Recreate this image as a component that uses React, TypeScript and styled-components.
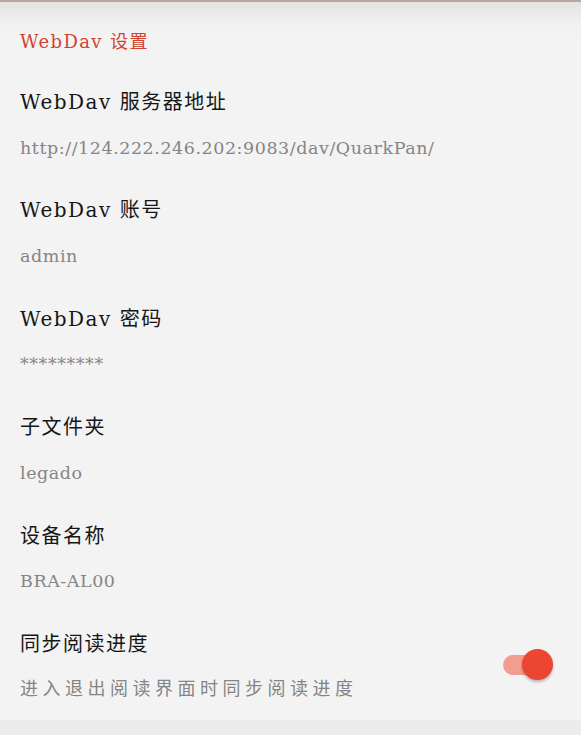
import React from "react";
import styled, { createGlobalStyle } from "styled-components";

const Global = createGlobalStyle`
  html, body { margin: 0; padding: 0; }
  body { background: #f3f3f3; }
  #root { min-height: 735px; }
`;

const FONT = `"DejaVu Serif", "Noto Sans CJK SC", serif`;

const Page = styled.div`
  width: 581px;
  height: 735px;
  display: flex;
  flex-direction: column;
  box-sizing: border-box;
  border-top: 2px solid #b9a79f;
  background: linear-gradient(#e3e3e3 0px, #f1f1f1 22px, #f3f3f3 34px);
  font-family: ${FONT};
  overflow: hidden;
`;

const Main = styled.div`
  flex: 1;
  display: flex;
  flex-direction: column;
`;

const Footer = styled.div`
  height: 15px;
  background: #ececec;
`;

const Header = styled.div`
  padding: 27px 20px 14px;
  line-height: 26px;
  font-size: 18px;
  letter-spacing: 1.4px;
  color: #d1432f;
`;

const Item = styled.div`
  display: flex;
  align-items: center;
  padding: 18px 28px 17.9px 20px;
`;

const Texts = styled.div`
  flex: 1;
  display: flex;
  flex-direction: column;
  gap: 18.5px;
`;

const Title = styled.div`
  font-size: 20px;
  line-height: 30px;
  letter-spacing: 1.5px;
  color: #161616;
`;

const Summary = styled.div<{ $cjk?: boolean }>`
  font-size: ${(p) => (p.$cjk ? "18px" : "17.5px")};
  line-height: 24px;
  letter-spacing: ${(p) => (p.$cjk ? "4.5px" : "0.55px")};
  color: #858585;
  white-space: nowrap;
`;

const Switch = styled.div`
  position: relative;
  width: 50px;
  height: 32px;
  flex: none;
`;

const Track = styled.div`
  position: absolute;
  left: 0;
  top: 6px;
  width: 42px;
  height: 20px;
  border-radius: 10px;
  background: #f29d91;
`;

const Thumb = styled.div`
  position: absolute;
  right: 0;
  top: 0;
  width: 31px;
  height: 31px;
  border-radius: 50%;
  background: #ea4631;
  box-shadow: 0 2px 3px rgba(0, 0, 0, 0.25);
`;

const items: { title: string; summary: string }[] = [
  { title: "WebDav 服务器地址", summary: "http://124.222.246.202:9083/dav/QuarkPan/" },
  { title: "WebDav 账号", summary: "admin" },
  { title: "WebDav 密码", summary: "*********" },
  { title: "子文件夹", summary: "legado" },
  { title: "设备名称", summary: "BRA-AL00" },
];

export default function App() {
  return (
    <>
      <Global />
      <Page>
        <Main>
          <Header>WebDav 设置</Header>
          {items.map((it) => (
            <Item key={it.title}>
              <Texts>
                <Title>{it.title}</Title>
                <Summary>{it.summary}</Summary>
              </Texts>
            </Item>
          ))}
          <Item>
            <Texts>
              <Title>同步阅读进度</Title>
              <Summary $cjk>进入退出阅读界面时同步阅读进度</Summary>
            </Texts>
            <Switch>
              <Track />
              <Thumb />
            </Switch>
          </Item>
        </Main>
        <Footer />
      </Page>
    </>
  );
}
